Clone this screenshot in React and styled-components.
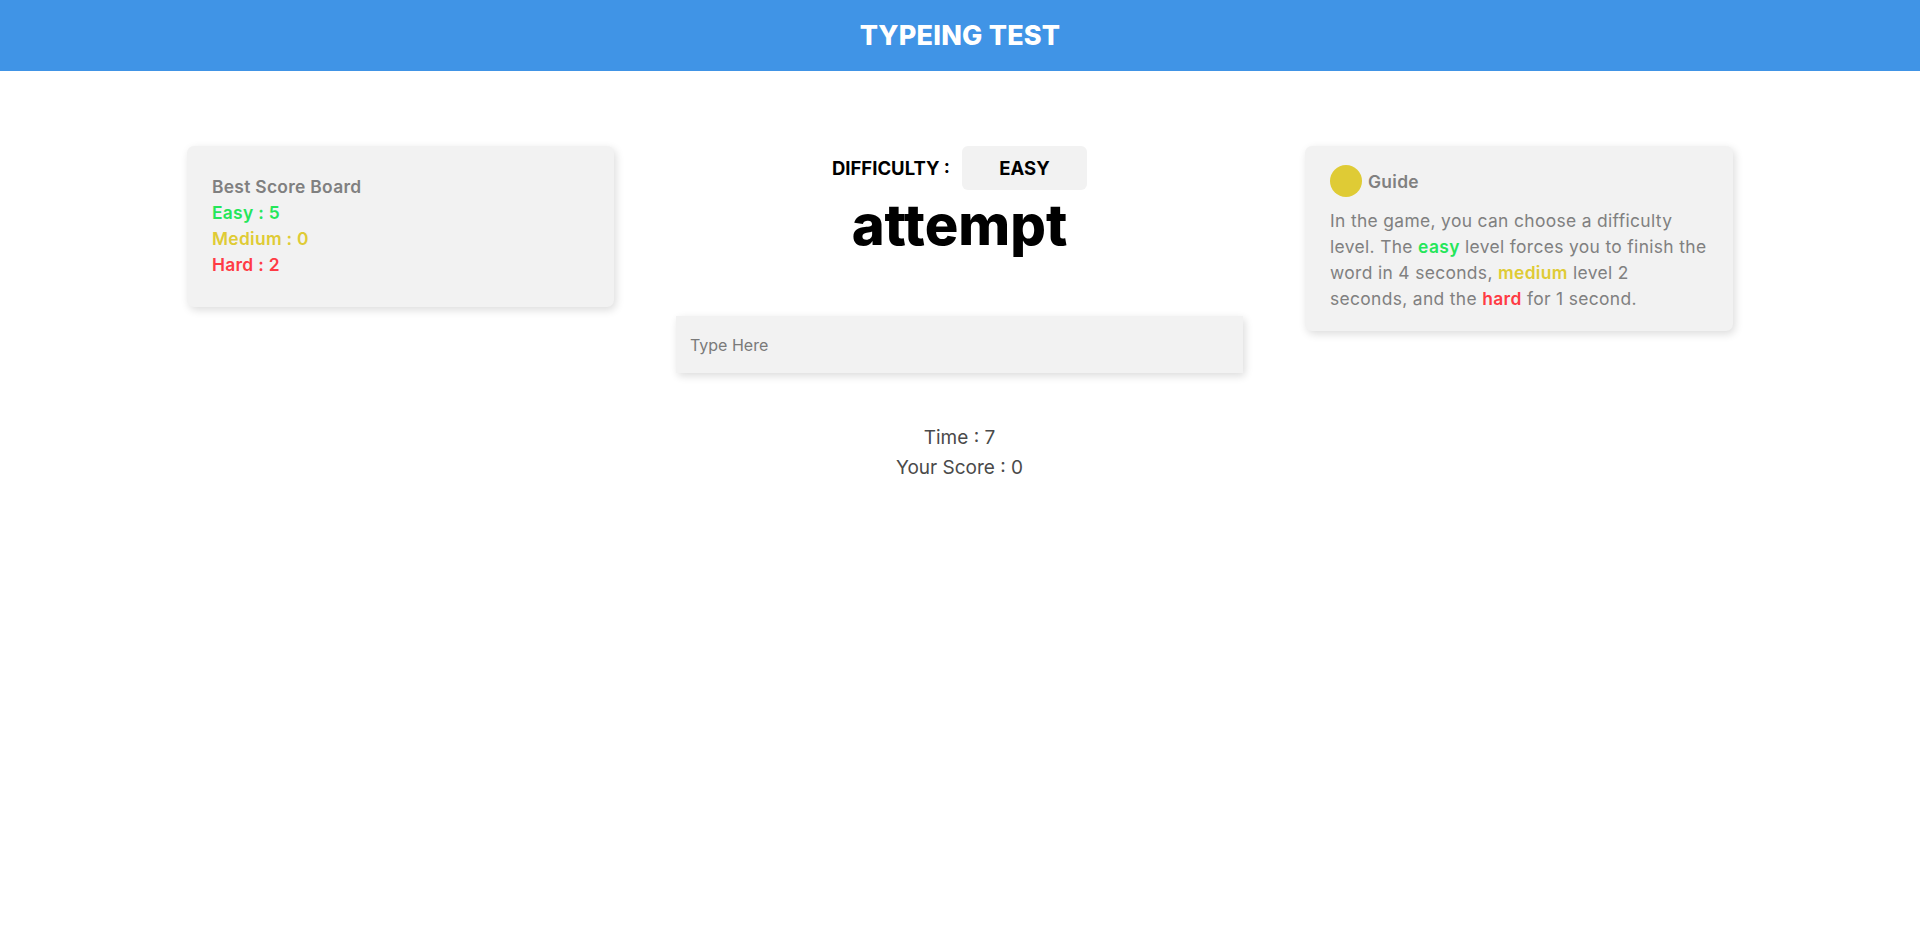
import React, { useState } from 'react'
import styled, { createGlobalStyle } from 'styled-components'

const GlobalStyle = createGlobalStyle`
    * {
        box-sizing: border-box;
    }
    body {
        margin: 0;
        font-family: 'Inter', 'Open Sans', sans-serif;
        background-color: #fff;
    }
`;

const Header = styled.header`
    height: 71px;
    background-color: #4094e6;
    display: flex;
    align-items: center;
    justify-content: center;
`;

const Title = styled.h1`
    margin: 0;
    color: #fff;
    font-size: 27px;
    font-weight: 800;
    letter-spacing: 0.2px;
`;

const Main = styled.main`
    display: grid;
    grid-template-columns: 427px 567px 428px;
    gap: 62px;
    justify-content: center;
    align-items: start;
    padding-top: 75px;
`;

const Card = styled.div`
    background-color: #f2f2f2;
    border-radius: 7px;
    box-shadow: 2px 3px 8px rgba(0, 0, 0, 0.14);
    padding: ${props => props.pad};
    color: #808080;
`;

const ScoreLine = styled.div`
    font-size: 17.4px;
    font-weight: 600;
    line-height: 26px;
    letter-spacing: 0.3px;
    color: ${props => props.color || '#808080'};
`;

const Center = styled.section`
    display: flex;
    flex-direction: column;
    align-items: center;
`;

const DifficultyRow = styled.div`
    display: flex;
    align-items: center;
    gap: 12px;
`;

const Label = styled.span`
    font-size: 18.5px;
    font-weight: 700;
    color: #000;
`;

const LevelButton = styled.button`
    width: 125px;
    height: 44px;
    border: none;
    border-radius: 6px;
    background-color: #f2f2f2;
    font-family: inherit;
    font-size: 18.5px;
    font-weight: 700;
    color: #000;
    cursor: pointer;
`;

const Word = styled.h2`
    margin: 3px 0 0;
    font-size: 56px;
    line-height: 65px;
    font-weight: 800;
    color: #000;
`;

const TypeInput = styled.input`
    width: 100%;
    height: 57px;
    margin-top: 58px;
    border: none;
    outline: none;
    background-color: #f2f2f2;
    box-shadow: 2px 3px 8px rgba(0, 0, 0, 0.14);
    padding: 0 14px;
    font-family: inherit;
    font-size: 16px;
    color: #333;

    &::placeholder {
        color: #7a7a7a;
    }
`;

const Stats = styled.div`
    margin-top: 50px;
    text-align: center;
    font-size: 19px;
    line-height: 30px;
    color: #4a4a4a;
`;

const GuideHead = styled.div`
    display: flex;
    align-items: center;
    gap: 6px;
`;

const Dot = styled.span`
    width: 32px;
    height: 32px;
    border-radius: 50%;
    background-color: #dfcb35;
`;

const GuideTitle = styled.span`
    font-size: 17.4px;
    font-weight: 600;
    letter-spacing: 0.3px;
    color: #808080;
`;

const GuideText = styled.p`
    margin: 11px 0 0;
    font-size: 17.4px;
    line-height: 26px;
    letter-spacing: 0.35px;
    color: #808080;
`;

const Mark = styled.span`
    font-weight: 600;
    color: ${props => props.color};
`;

const App = () => {
    const [typed, setTyped] = useState("")

    return (
        <>
            <GlobalStyle />
            <Header>
                <Title>TYPEING TEST</Title>
            </Header>
            <Main>
                <Card pad="28px 25px 29px">
                    <ScoreLine>Best Score Board</ScoreLine>
                    <ScoreLine color="#25e65a">Easy : 5</ScoreLine>
                    <ScoreLine color="#dfcb35">Medium : 0</ScoreLine>
                    <ScoreLine color="#ff3b44">Hard : 2</ScoreLine>
                </Card>
                <Center>
                    <DifficultyRow>
                        <Label>DIFFICULTY :</Label>
                        <LevelButton>EASY</LevelButton>
                    </DifficultyRow>
                    <Word>attempt</Word>
                    <TypeInput
                        type='text'
                        placeholder='Type Here'
                        value={typed}
                        onChange={e => setTyped(e.target.value)}
                    />
                    <Stats>
                        <div>Time : 7</div>
                        <div>Your Score : 0</div>
                    </Stats>
                </Center>
                <Card pad="19px 25px 19px">
                    <GuideHead>
                        <Dot />
                        <GuideTitle>Guide</GuideTitle>
                    </GuideHead>
                    <GuideText>
                        In the game, you can choose a difficulty level. The <Mark color="#25e65a">easy</Mark> level forces you to finish the word in 4 seconds, <Mark color="#dfcb35">medium</Mark> level 2 seconds, and the <Mark color="#ff3b44">hard</Mark> for 1 second.
                    </GuideText>
                </Card>
            </Main>
        </>
    )
}

export default App
